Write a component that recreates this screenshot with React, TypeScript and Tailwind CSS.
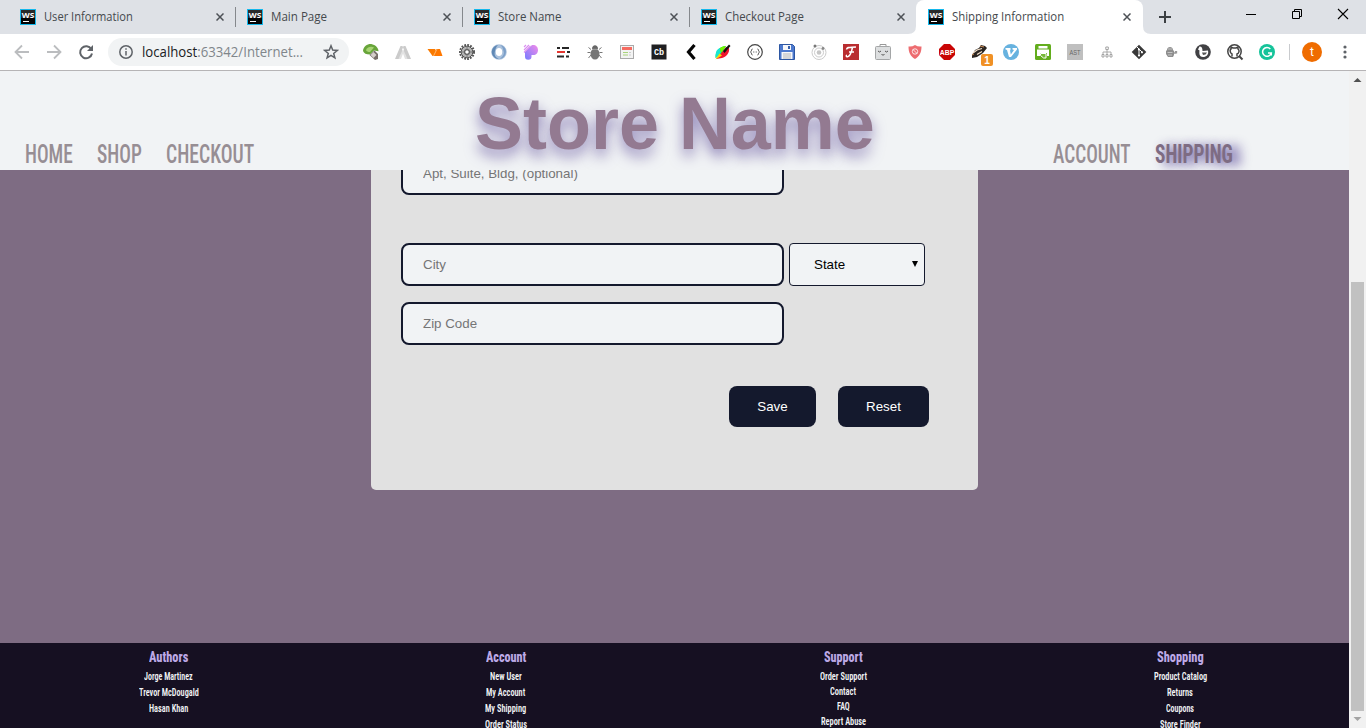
import { useLayoutEffect, useRef, useState } from "react";
import type { ReactNode } from "react";

/* Text condensed or widened so that it fills the width given in its class. */
function Fit({ className = "", children }: { className?: string; children: ReactNode }) {
  const outer = useRef<HTMLSpanElement>(null);
  const inner = useRef<HTMLSpanElement>(null);
  const [scale, setScale] = useState(1);
  useLayoutEffect(() => {
    if (outer.current && inner.current && inner.current.offsetWidth) {
      setScale(outer.current.clientWidth / inner.current.offsetWidth);
    }
  }, []);
  return (
    <span ref={outer} className={`block shrink-0 whitespace-nowrap ${className}`}>
      <span ref={inner} className="inline-block origin-left" style={{ transform: `scaleX(${scale})` }}>
        {children}
      </span>
    </span>
  );
}

function WebStormIcon() {
  return (
    <svg width="16" height="16" viewBox="0 0 16 16" className="shrink-0">
      <rect width="16" height="16" fill="#14b8ec" />
      <rect x="1" y="1" width="14" height="14" fill="#050505" />
      <rect x="1" y="1" width="14" height="8" fill="#2a2a2a" />
      <text x="8" y="8.500" textAnchor="middle" textLength="12.500" lengthAdjust="spacingAndGlyphs" fontSize="7.500" fontWeight="bold" fill="#fff" className="font-['Open_Sans']">WS</text>
      <path d="M3 12.500h6" stroke="#fff" />
    </svg>
  );
}

function CloseX() {
  return (
    <svg width="8" height="8" viewBox="0 0 8 8" className="shrink-0">
      <path d="M.5.500l7 7M7.500.500l-7 7" stroke="#4d5156" strokeWidth="1.500" />
    </svg>
  );
}

const tabs = [
  { title: "User Information", width: "w-[89px]" },
  { title: "Main Page", width: "w-[56px]" },
  { title: "Store Name", width: "w-[63px]" },
  { title: "Checkout Page", width: "w-[79px]" },
  { title: "Shipping Information", width: "w-[112px]" },
];

function TabStrip() {
  return (
    <div className="flex h-[34px] shrink-0 bg-[#dee1e6] pl-2">
      {tabs.map((tab, i) => {
        const active = i === 4;
        return (
          <div
            key={tab.title}
            className={`relative flex h-[34px] w-[227px] shrink-0 items-center pl-3 ${active ? "rounded-t-lg bg-white pr-3" : "pr-[11px]"}`}
          >
            <WebStormIcon />
            <Fit className={`ml-2 font-['Open_Sans'] text-[12px] leading-4 text-[#45494d] ${tab.width}`}>{tab.title}</Fit>
            <span className="ml-auto flex">
              <CloseX />
            </span>
            {i < 3 && <span className="absolute top-[7px] right-[-1px] h-5 w-px bg-[#85888c]" />}
            {active && (
              <>
                <svg width="8" height="8" className="absolute bottom-0 -left-2">
                  <path d="M0 8Q8 8 8 0V8Z" fill="#fff" />
                </svg>
                <svg width="8" height="8" className="absolute -right-2 bottom-0">
                  <path d="M8 8Q0 8 0 0V8Z" fill="#fff" />
                </svg>
              </>
            )}
          </div>
        );
      })}
      <svg width="223" height="34" viewBox="1143 0 223 34" fill="none">
        <path d="M1159 17h12M1165 11v12" stroke="#3c4043" strokeWidth="2" />
        <path d="M1246 14.500h10" stroke="#000" />
        <path d="M1292.500 11.500h7v7h-7zM1294.500 11.500v-2h7v7h-2" stroke="#000" />
        <path d="M1338 9l10 10M1348 9l-10 10" stroke="#000" strokeWidth="1.100" />
      </svg>
    </div>
  );
}

const label = "font-['Liberation_Sans']";

const extensions: ReactNode[] = [
  <>
    <path d="M0 7C.5 2 5-.5 9 .200c4 .7 6.500 4 6.500 7L11 6.500 7 10.500C3 10.500 1 9.500 0 7Z" fill="#68a53a" />
    <path d="M3 6C4.500 3 8 2 11 3.500L7 8C5 8 3.500 7.500 3 6Z" fill="#a8d474" />
    <path d="m6.500 11 5-4.500 3.500 3.500V15l-3 1Z" fill="#776e68" />
    <path d="m7.500 11 3-3 3 3-3 3Z" fill="#d5cfca" />
  </>,
  <>
    <path d="M0 15 5.500 2h2L9 6l-4 9ZM16 15 10.500 2h-2L7 6l4.500 9Z" fill="#cbcbcb" />
    <path d="m3.500 15 4-9h1l4 9H10L8 9.500 6 15Z" fill="#e2e2e2" />
  </>,
  <>
    <path d="M.5 5H8l3 7H5.500Z" fill="#f97a00" />
    <path d="M9 5H13l2.500 7H6.500Z" fill="#ff7800" />
    <path d="M10 5 6.500 12" stroke="#ffc78a" strokeWidth=".800" />
  </>,
  <>
    <circle cx="8" cy="8" r="7" fill="none" stroke="#555" strokeWidth="2" strokeDasharray="1.800 1.200" />
    <circle cx="8" cy="8" r="5.800" fill="#b5b5b5" stroke="#555" />
    <circle cx="8" cy="8" r="2.400" fill="#fff" stroke="#555" strokeWidth="1.200" />
    <path d="M8 2.500v3M8 10.500v3M2.500 8h3M10.500 8h3" stroke="#777" />
  </>,
  <>
    <circle cx="8" cy="8" r="5.500" fill="none" stroke="#aac1dc" strokeWidth="4.500" />
    <path d="M7 1C2 2 0 6 1 10c1 3 4 5 7 5-4-2-5-4-4-8 .5-2 1-4 3-6Z" fill="#6089b5" />
    <path d="M9 1c5 1 7 5 5.500 9-1 3-3 4.500-6 5 4-3 5-5 4-8C12 4 11 2 9 1Z" fill="#7c9fc8" />
    <ellipse cx="8" cy="8" rx="3" ry="4" fill="#fff" />
  </>,
  <>
    <defs>
      <linearGradient id="violet" x1="1" y1="0" x2="0" y2="1">
        <stop offset="0" stopColor="#f28be9" />
        <stop offset="1" stopColor="#767bff" />
      </linearGradient>
    </defs>
    <path d="M2 8 9 1h1c3 0 5 2 5 5s-2 5-4.500 5H8.500v1.500A3 3 0 0 1 2 12.500Z" fill="url(#violet)" />
    <path d="m1 3 2-2M1 6l5-5M1 8.500 7.500 2" stroke="#d98df0" strokeWidth="1.100" />
  </>,
  <>
    <path d="M2 4h3M7 4h7M2 12.500h7M11 12.500h3M12 8h3" stroke="#262626" strokeWidth="2" />
    <path d="M2 8h8" stroke="#e53630" strokeWidth="2" />
  </>,
  <>
    <path d="M4 5.500 1.500 3.500M12 5.500l2.500-2M3.500 8.500H.500M12.500 8.500h3M4 11l-2.500 3M12 11l2.500 3" stroke="#777" />
    <ellipse cx="8" cy="10" rx="4.500" ry="5.500" fill="#777" />
    <path d="M5 5C5 0 11 0 11 5Z" fill="#666" />
    <path d="M5 5.300h6" stroke="#aaa" strokeWidth=".800" />
  </>,
  <>
    <rect x="1.500" y="1.500" width="13" height="13" fill="#f3f3f3" stroke="#aaa" />
    <path d="M3 4.500h10" stroke="#f56b61" strokeWidth="3" />
    <path d="M4 8.500h5M4 11h5" stroke="#a9d47b" />
    <path d="M10 8.500h2M10 11h2" stroke="#ccc" />
  </>,
  <>
    <rect x=".500" y=".500" width="15" height="15" fill="#1e1f21" />
    <text x="8" y="11" textAnchor="middle" fontSize="8.500" fontWeight="bold" fill="#fff" className="font-['Liberation_Mono']">Cb</text>
  </>,
  <path d="m11.500 1-6 7 6 7" fill="none" stroke="#050505" strokeWidth="3.200" />,
  <>
    <path d="M.5 14C0 7 5 2 11 2L7 9Z" fill="#00e83c" />
    <path d="M.5 11C1 7 2 5 5 4l1 5-5 5Z" fill="#18e6d0" />
    <path d="M5 4q3-2 6-2L6 9Z" fill="#7bf500" />
    <path d="m1 15 7-8 3-4 3 1c1 5-3 9-7 10Z" fill="#ee142e" />
    <path d="m.500 15.500 4-6 2.500 2Z" fill="#ffd400" />
    <path d="m8 7 6-6.500L15.500 2 9.500 9Z" fill="#111" />
  </>,
  <>
    <circle cx="8" cy="8" r="7.300" fill="#fff" stroke="#454545" strokeWidth="1.200" />
    <path d="M5.500 5C4 5 5 7.500 3.500 8 5 8.500 4 11 5.500 11M10.500 5c1.500 0 .5 2.500 2 3-1.500.5-.5 3-2 3" fill="none" stroke="#444" />
    <path d="M6.300 8h1M8.700 8h1" stroke="#444" strokeWidth="1.200" />
  </>,
  <>
    <path d="M.5.500h13l2 2v13H.500Z" fill="#4d79ce" stroke="#2c56a2" />
    <path d="M4 1h8v5H4zM2.500 8h11v7h-11z" fill="#f6f7fa" />
    <path d="M9 2h2v3H9z" fill="#355fa9" />
    <path d="M4 10h8M4 12h8M4 14h8" stroke="#999" strokeWidth=".700" />
  </>,
  <>
    <circle cx="8" cy="8.500" r="7" fill="none" stroke="#ccc" />
    <circle cx="8" cy="8.500" r="4.500" fill="none" stroke="#ccc" />
    <circle cx="8" cy="8.500" r="2.300" fill="#c6c6c6" />
    <circle cx="4" cy="2" r="1.500" fill="#777" />
    <circle cx="12" cy="4.500" r="1.400" fill="#888" />
  </>,
  <>
    <rect width="16" height="16" fill="#b92d30" />
    <path d="M3.500 5.500C4 2.500 7 3.500 13 3M9.500 3.500C8.500 8 7 12.500 4.500 12.800c-1.500.2-1.500-1.500-.5-1.500M6 8h5" fill="none" stroke="#fff" strokeWidth="1.500" />
  </>,
  <>
    <path d="M5 2.500V.500h6v2" fill="none" stroke="#999" />
    <rect x=".500" y="2.500" width="15" height="13" rx="1" fill="#dcdedf" stroke="#a4a6a7" />
    <path d="M3 7q1.500 2 3 0M10 7q1.500 2 3 0M6.500 10.500q1.500 1.200 3 0" fill="none" stroke="#555" />
  </>,
  <>
    <path d="M8 1q3 2 6.500 1.500c0 6-2 10-6.500 12.500C3.500 12.500 1.500 8.500 1.500 2.500Q5 3 8 1Z" fill="#ed6c70" />
    <circle cx="8" cy="7.500" r="2.700" fill="none" stroke="#fff" strokeWidth=".800" />
    <path d="m6 5.500 4 4" stroke="#fff" strokeWidth=".800" />
  </>,
  <>
    <path d="M5 0h6l5 5v6l-5 5H5l-5-5V5Z" fill="#c90505" />
    <text x="8" y="10.800" textAnchor="middle" textLength="14.500" lengthAdjust="spacingAndGlyphs" fontSize="8" fontWeight="bold" fill="#fff" className={label}>ABP</text>
  </>,
  <>
    <path d="m1 11 3-5 4-2 2-3 4 1 2 2-4 5-6 4-5 1Z" fill="#2b2521" />
    <path d="m2 9 4-3 5-1.500M6 10.500l5-3" stroke="#f5e2cc" strokeWidth="1.200" />
    <path d="m9 2 4 1M1 11l2-1" stroke="#c98952" />
    <rect x="10" y="10" width="12" height="12" rx="2" fill="#f09125" />
    <text x="16" y="19.500" textAnchor="middle" fontSize="10" fontWeight="bold" fill="#fff" className={label}>1</text>
  </>,
  <>
    <circle cx="8" cy="8" r="8" fill="#67b2df" />
    <path d="M2.500 4h5v2l-.5.500.8 4L11 6 9.500 5.500V4H14v1.500L8 13H6L4 6 2.500 5.500Z" fill="#fff" />
  </>,
  <>
    <rect width="16" height="16" rx="1.500" fill="#63ad1d" />
    <path d="M3.500 2h9v2.500h-9zM2 5.500h12V12h-2V9H5v3H2z" fill="#fff" />
    <path d="M5.500 9.500h5.500v4.500H8.500l-3-2.500Z" fill="#77b938" stroke="#fff" />
  </>,
  <>
    <rect width="16" height="16" fill="#bfbfbf" />
    <text x="8" y="10.700" textAnchor="middle" fontSize="7" fill="#666" textLength="11" lengthAdjust="spacingAndGlyphs" className={label}>AST</text>
  </>,
  <>
    <path d="M8 5v6M4 11V8h8v3" fill="none" stroke="#aaa" />
    <path d="M6.800 3h2.500v2.500h-2.500zM3 10.500h2v2.500h-2zM7 10.500h2v2.500h-2zM11 10.500h2v2.500h-2z" fill="#fff" stroke="#a3a3a3" />
  </>,
  <>
    <path d="m8 .700 7.300 7.300L8 15.300.700 8Z" fill="#393939" />
    <path d="m6 3 2 2v7M8 5l3 3" fill="none" stroke="#fff" />
    <circle cx="8" cy="5.500" r="1.100" fill="#fff" />
    <circle cx="8" cy="11.500" r="1.100" fill="#fff" />
    <circle cx="11" cy="8.300" r="1.100" fill="#fff" />
  </>,
  <>
    <path d="M4 6c0-4 6-4 6 0l1 1v4l-1 2H5l-2-3V7Z" fill="#8e8e8e" />
    <path d="M5 5h4M4.500 8.500h5M5 11h4" stroke="#c4c4c4" />
    <path d="M11 9h1.500V7M13.500 7v2.500" stroke="#999" strokeWidth="1.300" fill="none" />
  </>,
  <>
    <circle cx="8" cy="8" r="7.800" fill="#414144" />
    <path d="M4.500 2.500c2.500-.5 3 2 3 4.500L13 6.500c1 4-1.500 6.500-5 6.500C4.500 13 4 9.500 4.500 6.500L3 5.500Z" fill="#fff" />
    <path d="M7 8.500h5q-1 2.500-4 2.500Z" fill="#555" />
  </>,
  <>
    <circle cx="7.500" cy="7.500" r="6.700" fill="#fff" stroke="#444" strokeWidth="1.500" />
    <path d="m12 12 3.500 3.500" stroke="#444" strokeWidth="2" />
    <path d="M5 12.500v-2.500C2.500 9 3 5 4 5V3l2 1h3l2-1v2c1.500 1 1.500 4-1 5v2.500" fill="none" stroke="#444" strokeWidth="1.500" />
  </>,
  <>
    <circle cx="8" cy="8" r="8" fill="#15c39a" />
    <path d="M11.300 5A4.400 4.400 0 1 0 12.300 9H9M12.300 9v2.500" fill="none" stroke="#fff" strokeWidth="1.500" />
  </>,
];

function Toolbar() {
  return (
    <div className="flex h-[37px] shrink-0 items-start border-b border-[#b6b4b6] bg-white">
      <svg width="108" height="36" viewBox="0 34 108 36" fill="none" className="shrink-0">
        <path d="M29 52H16M22 45.500 15.500 52l6.500 6.500M47 52h13M54 45.500l6.500 6.500-6.500 6.500" stroke="#bbbdbf" strokeWidth="1.800" />
        <path d="M91.300 49.200A6 6 0 1 0 92 53.500" stroke="#5f6368" strokeWidth="2" />
        <path d="M93 45v6h-6Z" fill="#5f6368" />
      </svg>
      <div className="mt-1 flex h-7 w-[241px] shrink-0 items-center rounded-full bg-[#f1f3f4] pr-2.5 pl-[11px]">
        <svg width="14" height="14" viewBox="0 0 14 14" fill="none" stroke="#5f6368" strokeWidth="1.500" className="shrink-0">
          <circle cx="7" cy="7" r="6.200" />
          <path d="M7 6v4.500M7 3.300v1.500" />
        </svg>
        <Fit className="ml-[9px] w-[161px] font-['Open_Sans'] text-[14px] leading-5 text-[#80868b]">
          <span className="text-[#202124]">localhost</span>:63342/Internet...
        </Fit>
        <svg width="16" height="16" viewBox="0 0 16 16" fill="none" className="ml-auto shrink-0">
          <path d="m8 1.800 1.700 4.300 4.600.3-3.600 3 1.200 4.500L8 11.400l-3.900 2.500 1.200-4.500-3.600-3 4.600-.3Z" stroke="#5f6368" strokeWidth="1.500" />
        </svg>
      </div>
      <div className="mt-2.5 ml-[14px] flex gap-4">
        {extensions.map((art, i) => (
          <svg key={i} width="16" height="16" viewBox="0 0 16 16" fill="none" className="shrink-0 overflow-visible">
            {art}
          </svg>
        ))}
      </div>
      <span className="mt-2.5 ml-[14px] h-4 w-px bg-[#c9cbce]" />
      <span className="mt-2 ml-3 flex h-5 w-5 items-center justify-center rounded-full bg-[#ef6c00] font-['Roboto'] text-[12px] leading-none text-white">t</span>
      <svg width="4" height="14" viewBox="0 0 4 14" fill="#5f6368" className="mt-[11px] ml-[21px]">
        <circle cx="2" cy="2" r="1.600" />
        <circle cx="2" cy="7" r="1.600" />
        <circle cx="2" cy="12" r="1.600" />
      </svg>
    </div>
  );
}

function SiteHeader() {
  return (
    <header className="relative flex h-[99px] shrink-0 items-end justify-between overflow-hidden bg-[#f1f3f5] pr-[116px] pl-[25px] font-['Roboto'] text-[25px] leading-[30px] text-[#978e94] font-stretch-condensed">
      <nav className="flex gap-6">
        <Fit className="w-[48px] font-medium">HOME</Fit>
        <Fit className="w-[45px] font-medium">SHOP</Fit>
        <Fit className="w-[88px] font-medium">CHECKOUT</Fit>
      </nav>
      <h1 className="absolute inset-x-0 top-[11px] flex justify-center font-['Liberation_Sans'] text-[75px] leading-[82px] font-bold text-[#937a91] font-stretch-normal [text-shadow:0_7px_14px_rgba(80,62,145,0.6)]">
        <Fit className="w-[400px]">Store Name</Fit>
      </h1>
      <nav className="flex gap-6">
        <Fit className="w-[78px] font-medium">ACCOUNT</Fit>
        <Fit className="w-[78px] font-bold text-[#7e6c83] [text-shadow:10px_2px_12px_rgba(60,40,135,0.9)]">SHIPPING</Fit>
      </nav>
    </header>
  );
}

const field =
  "block h-[43px] w-[383px] rounded-lg border-2 border-[#14192d] bg-[#f1f3f5] px-5 text-[13.333px] text-black placeholder:text-[#757575]";
const button = "h-[41px] rounded-lg bg-[#14192d] text-[13.333px] text-white";

function ShippingForm() {
  return (
    <form className="mx-auto h-[320px] w-[607px] overflow-hidden rounded-b-[5px] bg-[#e1e1e1] pl-[30px] font-['Liberation_Sans']">
      <input className={`${field} -mt-[18px]`} placeholder="Apt, Suite, Bldg, (optional)" />
      <div className="mt-12 flex gap-[5px]">
        <input className={field} placeholder="City" />
        <button type="button" className="flex h-[43px] w-[136px] items-center justify-between rounded border border-[#14192d] bg-[#f1f3f5] pr-[6px] pl-6 text-[13.333px] text-black">
          State
          <svg width="6" height="6" viewBox="0 0 6 6" className="-mt-px">
            <path d="M0 0h6L3 6Z" fill="#000" />
          </svg>
        </button>
      </div>
      <input className={`${field} mt-4`} placeholder="Zip Code" />
      <div className="mt-[41px] mr-[49px] flex justify-end gap-[22px]">
        <button type="button" className={`${button} w-[87px]`}>Save</button>
        <button type="button" className={`${button} w-[91px]`}>Reset</button>
      </div>
    </form>
  );
}

const columns = [
  {
    title: ["Authors", "w-[39px]"],
    row: "h-4",
    links: [["Jorge Martinez", "w-[49px]"], ["Trevor McDougald", "w-[60px]"], ["Hasan Khan", "w-[39px]"]],
  },
  {
    title: ["Account", "w-[40px]"],
    row: "h-4",
    links: [["New User", "w-[32px]"], ["My Account", "w-[39px]"], ["My Shipping", "w-[41px]"], ["Order Status", "w-[42px]"]],
  },
  {
    title: ["Support", "w-[39px]"],
    row: "h-[15px]",
    links: [["Order Support", "w-[47px]"], ["Contact", "w-[26px]"], ["FAQ", "w-[13px]"], ["Report Abuse", "w-[45px]"]],
  },
  {
    title: ["Shopping", "w-[47px]"],
    row: "h-4",
    links: [["Product Catalog", "w-[53px]"], ["Returns", "w-[26px]"], ["Coupons", "w-[28px]"], ["Store Finder", "w-[41px]"]],
  },
];

function SiteFooter() {
  return (
    <footer className="grid h-[85px] shrink-0 grid-cols-4 overflow-hidden bg-[#161022] pt-1 font-['Roboto'] font-stretch-condensed">
      {columns.map((column) => (
        <div key={column.title[0]} className="flex flex-col items-center">
          <Fit className={`h-[22px] text-[15.5px] leading-5 font-extrabold text-[#bda9e6] ${column.title[1]}`}>{column.title[0]}</Fit>
          {column.links.map(([text, width]) => (
            <div key={text} className={`flex shrink-0 ${column.row}`}>
              <Fit className={`text-[10px] leading-4 font-semibold text-[#f1f3f5] ${width}`}>{text}</Fit>
            </div>
          ))}
        </div>
      ))}
    </footer>
  );
}

function ScrollBar() {
  return (
    <div className="flex w-[17px] shrink-0 flex-col items-center justify-between bg-[#f1f1f1]">
      <svg width="17" height="17" viewBox="0 0 17 17">
        <path d="m4.500 11 4-4 4 4Z" fill="#505050" />
      </svg>
      <div className="mt-auto h-[429px] w-[13px] bg-[#c1c1c1]" />
      <svg width="17" height="17" viewBox="0 0 17 17">
        <path d="m4.500 6 4 4 4-4Z" fill="#a3a3a3" />
      </svg>
    </div>
  );
}

export default function App() {
  return (
    <div className="flex h-[728px] w-[1366px] flex-col overflow-hidden bg-white">
      <TabStrip />
      <Toolbar />
      <div className="flex min-h-0 flex-1">
        <div className="flex min-w-0 flex-1 flex-col">
          <SiteHeader />
          <main className="min-h-0 flex-1 overflow-hidden bg-[#7e6c83]">
            <ShippingForm />
          </main>
          <SiteFooter />
        </div>
        <ScrollBar />
      </div>
    </div>
  );
}
